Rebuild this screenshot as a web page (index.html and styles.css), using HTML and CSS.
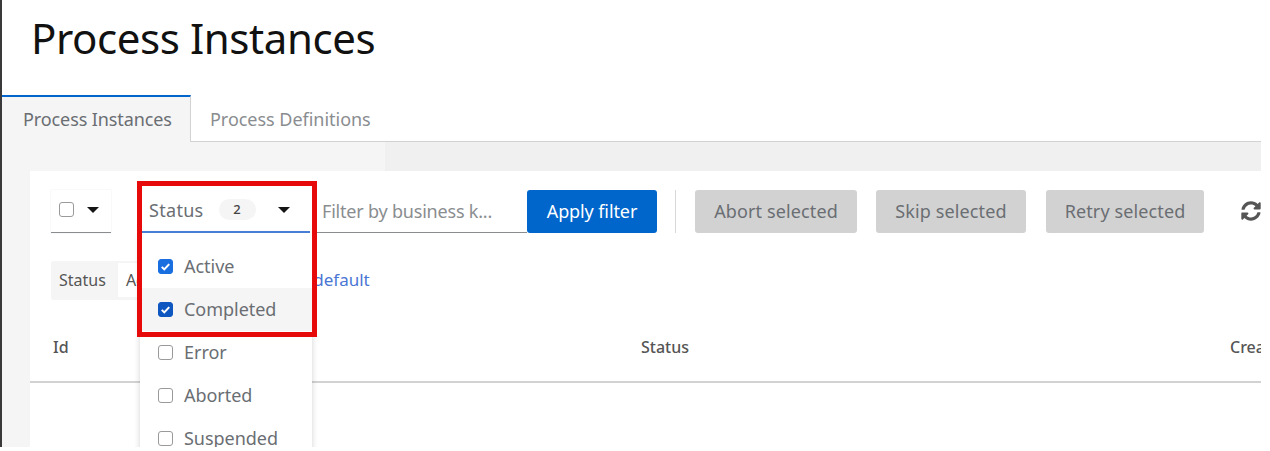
FILE: index.html
```html
<!DOCTYPE html>
<html lang="en">
<head>
<meta charset="utf-8">
<title>Process Instances</title>
<link rel="stylesheet" href="styles.css">
</head>
<body>
<div class="page">
  <header class="head"><h1 class="title">Process Instances</h1></header>
  <nav class="tabs">
    <div class="tab tab-active">Process Instances</div>
    <div class="tab">Process Definitions</div>
    <div class="tab-rest"></div>
  </nav>
  <main class="content">
    <section class="card">
      <div class="toolbar">
        <div class="bulk">
          <span class="check"></span>
          <span class="caret"></span>
        </div>
        <div class="status-wrap">
          <div class="status-select">
            <span class="status-label">Status</span>
            <span class="count">2</span>
            <span class="caret"></span>
          </div>
          <ul class="menu">
            <li class="menu-item"><span class="check checked"><svg viewBox="0 0 14 14" class="tick"><path d="M3 7.4l2.7 2.7L11 4.4"/></svg></span>Active</li>
            <li class="menu-item menu-hover"><span class="check checked dark"><svg viewBox="0 0 14 14" class="tick"><path d="M3 7.4l2.7 2.7L11 4.4"/></svg></span>Completed</li>
            <li class="menu-item"><span class="check"></span>Error</li>
            <li class="menu-item"><span class="check"></span>Aborted</li>
            <li class="menu-item"><span class="check"></span>Suspended</li>
          </ul>
        </div>
        <div class="search">Filter by business k...</div>
        <button class="btn btn-primary">Apply filter</button>
        <span class="divider"></span>
        <button class="btn btn-off btn-abort">Abort selected</button>
        <button class="btn btn-off btn-skip">Skip selected</button>
        <button class="btn btn-off btn-retry">Retry selected</button>
        <svg class="refresh" viewBox="0 0 512 512"><path d="M370.7 133.3C339.5 104 298.9 88 255.8 88c-77.5.1-144.3 53.2-162.8 126.9-1.3 5.4-6.1 9.1-11.6 9.1H24.1c-7.5 0-13.2-6.8-11.8-14.2C33.9 94.9 134.8 8 256 8c66.4 0 126.8 26.1 171.3 68.7L463 41C478.1 25.9 504 36.6 504 57.9V192c0 13.3-10.7 24-24 24H345.9c-21.4 0-32.1-25.9-17-41l41.8-41.7zM32 296h134.1c21.4 0 32.1 25.9 17 41l-41.8 41.8c31.3 29.3 71.8 45.3 114.9 45.2 77.4-.1 144.3-53.1 162.8-126.8 1.3-5.4 6.1-9.1 11.6-9.1h57.3c7.5 0 13.2 6.8 11.8 14.2C478.1 417.1 377.2 504 256 504c-66.4 0-126.8-26.1-171.3-68.7L49 471C33.9 486.1 8 475.4 8 454.1V320c0-13.3 10.7-24 24-24z"/></svg>
      </div>
      <div class="chips">
        <div class="chip-group"><span>Status</span><span class="chip">Active</span></div>
        <a class="reset">Reset to default</a>
      </div>
      <div class="thead">
        <span class="th">Id</span>
        <span class="th">Status</span>
        <span class="th">Created</span>
      </div>
    </section>
  </main>
  <div class="marker"></div>
</div>
</body>
</html>
```
FILE: styles.css
```css
* { box-sizing: border-box; }
html, body { margin: 0; padding: 0; background: #fff; }
body { width: 1270px; height: 451px; overflow: hidden; font-family: "Noto Sans", sans-serif; color: #151515; }
.page { position: relative; width: 1261px; height: 447px; overflow: hidden; border-left: 2px solid #3a3a3a; display: flex; flex-direction: column; }
.head { height: 95px; padding: 13px 0 0 29px; flex: none; }
.title { margin: 0; font-family: "Noto Sans", sans-serif; font-weight: 400; font-size: 42px; line-height: 50px; letter-spacing: -.42px; color: #111; }
.tabs { display: flex; height: 47px; flex: none; }
.tab { height: 47px; padding: 12px 20px 0 19px; font-size: 18px; line-height: 24px; color: #8a8d90; letter-spacing: -.03px; border-bottom: 1px solid #d2d2d2; white-space: nowrap; }
.tab-active { width: 189px; padding-left: 21px; padding-top: 10px; background: #f5f5f5; border-top: 2px solid #06c; border-right: 1px solid #d2d2d2; border-bottom: 0; color: #6a6e73; letter-spacing: -.1px; }
.tab-rest { flex: 1; border-bottom: 1px solid #d2d2d2; }
.content { flex: 1; background: #f5f5f5 linear-gradient(#f0f0f0, #f0f0f0) no-repeat 383px 0 / 100% 29px; padding: 29px 0 0 28px; }
.card { background: #fff; height: 300px; padding: 19px 0 0 21px; }
.toolbar { display: flex; align-items: stretch; height: 43px; }
.bulk { width: 60px; display: flex; align-items: center; padding-left: 8px; gap: 13px; border-bottom: 1px solid #8a8d90; box-shadow: 0 0 1px #ddd; padding-bottom: 3px; }
.check { display: inline-block; width: 15px; height: 15px; border: 1.5px solid #9a9a9a; border-radius: 3px; background: #fff; flex: none; }
.checked { background: #1a6fe0; border-color: #1a6fe0; display: flex; align-items: center; justify-content: center; }
.dark { background: #0f57c0; border-color: #0f57c0; }
.tick { width: 13px; height: 13px; fill: none; stroke: #fff; stroke-width: 2.2; }
.caret { display: inline-block; width: 0; height: 0; border-left: 6.5px solid transparent; border-right: 6.5px solid transparent; border-top: 6.5px solid #151515; flex: none; }
.status-wrap { position: relative; width: 168px; margin-left: 31px; flex: none; }
.status-select { height: 43px; display: flex; align-items: center; padding: 0 0 2px 7px; border-bottom: 2px solid #4a83dc; font-size: 18px; color: #6a6e73; letter-spacing: .3px; }
.count { width: 37px; height: 21px; margin-left: 15px; border-radius: 11px; background: #f5f5f5; color: #444; font-size: 13px; line-height: 21px; text-align: center; font-weight: 500; }
.status-select .caret { margin-left: 22px; }
.menu { position: absolute; z-index: 2; left: -2px; top: 43px; width: 172px; height: 230px; margin: 0; padding: 12px 0 0; list-style: none; background: #fff; box-shadow: 0 2px 6px rgba(0,0,0,.18); }
.menu-item { height: 43px; display: flex; align-items: center; padding: 0 0 2px 18px; gap: 11px; font-size: 18px; color: #6a6e73; letter-spacing: -.03px; }
.menu-item .check { margin-top: 2px; }
.menu-hover { background: #f5f5f5; }
.search { width: 210px; margin-left: 7px; padding: 9px 0 0 5px; font-size: 18px; line-height: 24px; color: #8a8d90; letter-spacing: -.2px; border-bottom: 1px solid #8a8d90; white-space: nowrap; }
.btn { height: 43px; padding: 0 0 2px; border: 0; border-radius: 3px; font-family: inherit; font-size: 18px; }
.btn-primary { width: 130px; background: #06c; color: #fff; letter-spacing: -.1px; }
.divider { width: 1px; height: 43px; margin: 0 19px 0 18px; background: #d8d8d8; }
.btn-off { background: #d2d2d2; color: #6a6e73; letter-spacing: .12px; }
.btn-abort { width: 162px; }
.btn-skip { width: 150px; margin-left: 19px; }
.btn-retry { width: 158px; margin-left: 20px; }
.refresh { width: 20px; height: 20px; margin: 11px 0 0 37px; fill: #555; flex: none; }
.chips { display: flex; align-items: center; height: 39px; margin-top: 28px; gap: 9px; font-size: 16px; }
.chip-group { width: 184px; height: 39px; display: flex; align-items: center; gap: 12px; padding: 0 0 2px 8px; background: #f5f5f5; border-radius: 3px; color: #555; white-space: nowrap; }
.chip { background: #fff; padding: 6px 8px; color: #555; }
.reset { font-size: 17px; color: #4a76d4; white-space: nowrap; padding-bottom: 2px; }
.thead { display: grid; grid-template-columns: 588px 589px 100px; height: 83px; margin: 0 0 0 -21px; padding: 36px 0 0 23px; border-bottom: 2px solid #d2d2d2; font-size: 16px; font-weight: 500; color: #555; white-space: nowrap; }
.marker { position: absolute; z-index: 3; left: 135px; top: 181px; width: 180px; height: 156px; border: 5px solid #e60a0a; }
```
